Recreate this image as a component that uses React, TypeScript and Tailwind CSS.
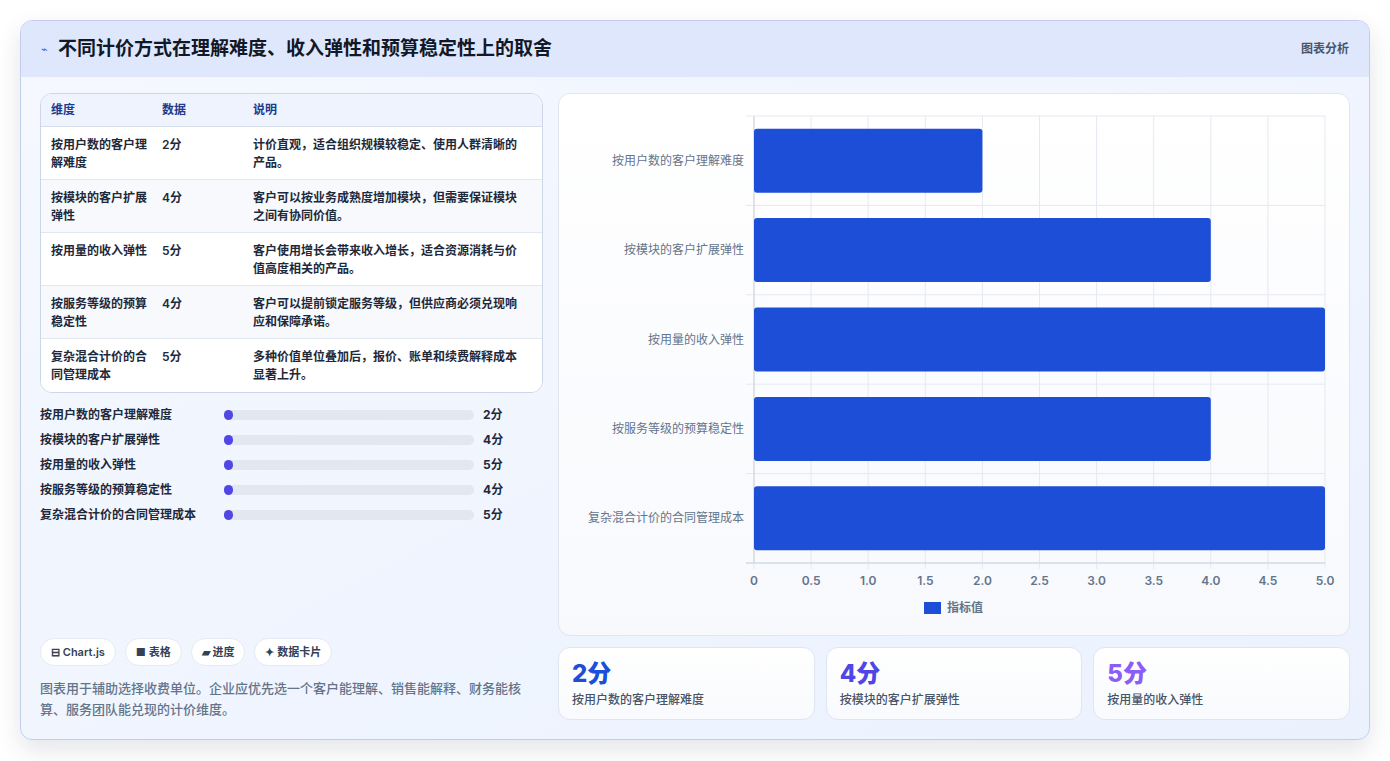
import React from "react";

const rows = [
  ["按用户数的客户理解难度", 2, "计价直观，适合组织规模较稳定、使用人群清晰的产品。"],
  ["按模块的客户扩展弹性", 4, "客户可以按业务成熟度增加模块，但需要保证模块之间有协同价值。"],
  ["按用量的收入弹性", 5, "客户使用增长会带来收入增长，适合资源消耗与价值高度相关的产品。"],
  ["按服务等级的预算稳定性", 4, "客户可以提前锁定服务等级，但供应商必须兑现响应和保障承诺。"],
  ["复杂混合计价的合同管理成本", 5, "多种价值单位叠加后，报价、账单和续费解释成本显著上升。"],
] as const;

function Chart() {
  const L = 195, R = 766, T = 22, B = 469;
  const band = (B - T) / 5;
  const sx = (v: number) => L + ((R - L) * v) / 5;
  const ticks = [0, 0.5, 1, 1.5, 2, 2.5, 3, 3.5, 4, 4.5, 5];
  return (
    <svg width="790" height="541" className="block" style={{ fontFamily: "Inter, 'Noto Sans CJK SC', sans-serif" }}>
      {ticks.map((t) => (
        <line key={t} x1={sx(t)} x2={sx(t)} y1={T} y2={B + 6} stroke="#e5e9f0" />
      ))}
      {[0, 1, 2, 3, 4, 5].map((i) => (
        <line key={i} x1={L - 8} x2={R} y1={T + band * i} y2={T + band * i} stroke="#e5e9f0" />
      ))}
      <line x1={L} x2={L} y1={T} y2={B} stroke="#cbd2dc" />
      <line x1={L - 8} x2={R} y1={B} y2={B} stroke="#cbd2dc" />
      {rows.map((r, i) => {
        const cy = T + band * i + band / 2;
        return (
          <g key={i}>
            <rect x={L} y={cy - 32} width={sx(r[1]) - L} height={64} rx={3} fill="#1d4ed8" />
            <text x={L - 10} y={cy + 4} textAnchor="end" fontSize="12" fill="#64748b">{r[0]}</text>
          </g>
        );
      })}
      {ticks.map((t) => (
        <text key={t} x={sx(t)} y={491} textAnchor="middle" fontSize="12" fontWeight="600" fill="#64748b">
          {t === 0 ? "0" : t.toFixed(1)}
        </text>
      ))}
      <rect x={365} y={508} width={17} height={12} fill="#1d4ed8" />
      <text x={388} y={518} fontSize="12" fontWeight="600" fill="#64748b">指标值</text>
    </svg>
  );
}

export default function App() {
  return (
    <div className="w-[1390px] h-[761px] bg-white p-5" style={{ fontFamily: "Inter, 'Noto Sans CJK SC', sans-serif" }}>
      <div className="h-[720px] rounded-xl border border-[#c3cdee] bg-gradient-to-br from-[#f5f8ff] to-[#ebf2fe] shadow-[0_10px_25px_rgba(30,41,80,0.12)] overflow-hidden flex flex-col">
        <div className="h-[56px] shrink-0 bg-[#dfe7fd] flex items-center justify-between px-5">
          <div className="flex items-center gap-2.5">
            <span className="text-[#2563eb] text-[11px]">⌁</span>
            <span className="text-[19px] font-bold text-[#111827]">不同计价方式在理解难度、收入弹性和预算稳定性上的取舍</span>
          </div>
          <span className="text-xs font-semibold text-[#475569]">图表分析</span>
        </div>
        <div className="flex-1 flex gap-[15px] px-[19px] pt-4 pb-[19px]">
          <div className="w-[506px] flex flex-col">
            <div className="rounded-xl border border-[#cdd6e6] bg-white overflow-hidden text-xs text-[#1e293b]">
              <div className="flex h-[33px] items-center bg-[#eef3fe] border-b border-[#d6deea] text-[#1e3a8a] font-semibold">
                <div className="w-[121px] pl-[10px]">维度</div>
                <div className="w-[91px]">数据</div>
                <div>说明</div>
              </div>
              {rows.map((r, i) => (
                <div key={i} className={`flex h-[53px] pt-[9px] leading-[18px] font-semibold ${i < 4 ? "border-b border-[#e2e8f0]" : ""} ${i % 2 ? "bg-[#f7f9fc]" : "bg-white"}`}>
                  <div className="w-[121px] pl-[10px] pr-3">{r[0]}</div>
                  <div className="w-[91px]">{r[1]}分</div>
                  <div className="w-[275px]">{r[2]}</div>
                </div>
              ))}
            </div>
            <div className="mt-[12px] flex flex-col gap-[6px]">
              {rows.map((r, i) => (
                <div key={i} className="flex items-center h-[19px] text-xs font-semibold text-[#1e293b]">
                  <div className="w-[184px]">{r[0]}</div>
                  <div className="w-[250px] h-[10px] rounded-full bg-[#e2e8f0] relative">
                    <div className="absolute left-0 top-0 h-[10px] w-[9px] rounded-full bg-[#4f46e5]" />
                  </div>
                  <div className="ml-[9px] font-bold">{r[1]}分</div>
                </div>
              ))}
            </div>
            <div className="mt-auto flex gap-[9px]">
              {["⊟ Chart.js", "■ 表格", "▰ 进度", "✦ 数据卡片"].map((c) => (
                <span key={c} className="h-[28px] px-[10px] flex items-center rounded-full bg-white border border-[#e5eaf3] text-[11px] font-semibold text-[#334155]">{c}</span>
              ))}
            </div>
            <p className="mt-[12px] text-[13px] leading-[21px] text-[#64748b] font-medium">
              图表用于辅助选择收费单位。企业应优先选一个客户能理解、销售能解释、财务能核算、服务团队能兑现的计价维度。
            </p>
          </div>
          <div className="flex-1 flex flex-col gap-[11px]">
            <div className="h-[543px] rounded-xl border border-[#dfe6f2] bg-gradient-to-b from-white to-[#f7f9fd]">
              <Chart />
            </div>
            <div className="flex gap-[11px] flex-1">
              {[["2分", "text-[#1d4ed8]", rows[0][0]], ["4分", "text-[#4f46e5]", rows[1][0]], ["5分", "text-[#8b5cf6]", rows[2][0]]].map(([v, c, l]) => (
                <div key={l} className="flex-1 rounded-xl border border-[#dfe6f2] bg-gradient-to-b from-white to-[#f8fafd] px-[13px] pt-[12px]">
                  <div className={`text-[24px] leading-[28px] font-extrabold ${c}`}>{v}</div>
                  <div className="mt-[4px] text-xs text-[#475569] font-medium">{l}</div>
                </div>
              ))}
            </div>
          </div>
        </div>
      </div>
    </div>
  );
}
